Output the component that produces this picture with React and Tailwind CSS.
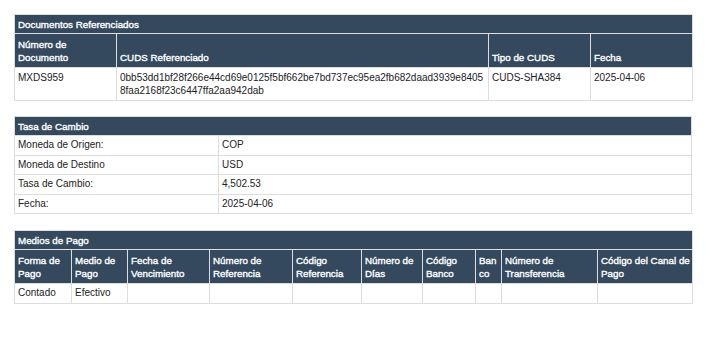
import React from 'react';

const th = 'border border-[#dddddd] bg-[#34495e] text-white font-normal text-[9.8px] [-webkit-text-stroke:0.35px_white] text-left align-bottom px-[3px] py-[3px]';
const td = 'border border-[#dddddd] text-[#222222] align-top px-[3px] py-[3px]';
const tdRow = 'border border-[#dddddd] text-[#222222] align-top px-[3px] py-[3px] leading-[12.5px]';

const Title = ({ children, cols }) => (
  <tr>
    <th colSpan={cols} className="border border-[#dddddd] bg-[#34495e] text-white font-normal text-[9.8px] [-webkit-text-stroke:0.35px_white] text-left px-[3px] py-[2px] h-[19px]">
      {children}
    </th>
  </tr>
);

const pagoCols = [
  ['Forma de Pago', 'w-[57px]'],
  ['Medio de Pago', 'w-[56px]'],
  ['Fecha de Vencimiento', 'w-[82px]'],
  ['Número de Referencia', 'w-[83px]'],
  ['Código Referencia', 'w-[69px]'],
  ['Número de Días', 'w-[61px]'],
  ['Código Banco', 'w-[53px]'],
  ['Banco', 'w-[26px]'],
  ['Número de Transferencia', 'w-[96px]'],
  ['Código del Canal de Pago', 'w-[95px]'],
];

export default function App() {
  return (
    <div className="bg-white min-h-[350px] pl-[14px] pt-[14px] text-[10px] leading-[13px]" style={{ fontFamily: '"Liberation Sans", Arial, sans-serif' }}>
      <table className="w-[678px] border-collapse table-fixed">
        <colgroup>
          <col className="w-[102px]" />
          <col className="w-[372px]" />
          <col className="w-[102px]" />
          <col className="w-[102px]" />
        </colgroup>
        <thead>
          <Title cols={4}>Documentos Referenciados</Title>
          <tr className="h-[34px]">
            <th className={th}>Número de Documento</th>
            <th className={th}>CUDS Referenciado</th>
            <th className={th}>Tipo de CUDS</th>
            <th className={th}>Fecha</th>
          </tr>
        </thead>
        <tbody>
          <tr className="h-[33px]">
            <td className={td}>MXDS959</td>
            <td className={`${td} break-all`}>0bb53dd1bf28f266e44cd69e0125f5bf662be7bd737ec95ea2fb682daad3939e84058faa2168f23c6447ffa2aa942dab</td>
            <td className={td}>CUDS-SHA384</td>
            <td className={td}>2025-04-06</td>
          </tr>
        </tbody>
      </table>

      <table className="w-[678px] border-collapse table-fixed mt-[15px]">
        <colgroup>
          <col className="w-[204px]" />
          <col />
        </colgroup>
        <thead>
          <Title cols={2}>Tasa de Cambio</Title>
        </thead>
        <tbody>
          {[
            ['Moneda de Origen:', 'COP'],
            ['Moneda de Destino', 'USD'],
            ['Tasa de Cambio:', '4,502.53'],
            ['Fecha:', '2025-04-06'],
          ].map(([k, v]) => (
            <tr key={k}>
              <td className={tdRow}>{k}</td>
              <td className={tdRow}>{v}</td>
            </tr>
          ))}
        </tbody>
      </table>

      <table className="w-[678px] border-collapse table-fixed mt-[16px]">
        <colgroup>
          {pagoCols.map(([n, w]) => (
            <col key={n} className={w} />
          ))}
        </colgroup>
        <thead>
          <Title cols={10}>Medios de Pago</Title>
          <tr className="h-[34px]">
            {pagoCols.slice(0, 9).map(([n]) => (
              <th key={n} className={`${th} ${n === 'Banco' ? 'break-all' : ''}`}>{n}</th>
            ))}
            <th className={`${th} whitespace-nowrap pr-0 overflow-visible`}>
              Código del Canal de
              <br />
              Pago
            </th>
          </tr>
        </thead>
        <tbody>
          <tr>
            <td className={tdRow}>Contado</td>
            <td className={tdRow}>Efectivo</td>
            <td className={tdRow}></td>
            <td className={tdRow}></td>
            <td className={tdRow}></td>
            <td className={tdRow}></td>
            <td className={tdRow}></td>
            <td className={tdRow}></td>
            <td className={tdRow}></td>
            <td className={tdRow}></td>
          </tr>
        </tbody>
      </table>
    </div>
  );
}
